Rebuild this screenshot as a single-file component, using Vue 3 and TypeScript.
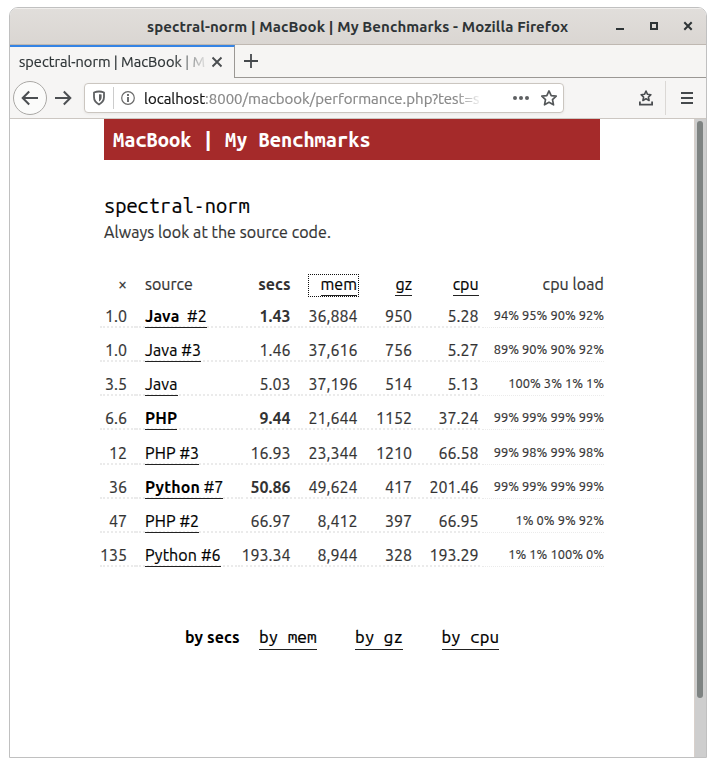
<script setup lang="ts">
interface Row {
  ratio: string
  lang: string
  id: string
  best?: boolean
  secs: string
  mem: string
  gz: string
  cpu: string
  load: string
}

const rows: Row[] = [
  { ratio: '1.0', lang: 'Java', id: '\u00a0 #2', best: true, secs: '1.43', mem: '36,884', gz: '950', cpu: '5.28', load: '94% 95% 90% 92%' },
  { ratio: '1.0', lang: 'Java', id: ' #3', secs: '1.46', mem: '37,616', gz: '756', cpu: '5.27', load: '89% 90% 90% 92%' },
  { ratio: '3.5', lang: 'Java', id: '', secs: '5.03', mem: '37,196', gz: '514', cpu: '5.13', load: '100% 3% 1% 1%' },
  { ratio: '6.6', lang: 'PHP', id: '', best: true, secs: '9.44', mem: '21,644', gz: '1152', cpu: '37.24', load: '99% 99% 99% 99%' },
  { ratio: '12', lang: 'PHP', id: ' #3', secs: '16.93', mem: '23,344', gz: '1210', cpu: '66.58', load: '99% 98% 99% 98%' },
  { ratio: '36', lang: 'Python', id: ' #7', best: true, secs: '50.86', mem: '49,624', gz: '417', cpu: '201.46', load: '99% 99% 99% 99%' },
  { ratio: '47', lang: 'PHP', id: ' #2', secs: '66.97', mem: '8,412', gz: '397', cpu: '66.95', load: '1% 0% 9% 92%' },
  { ratio: '135', lang: 'Python', id: ' #6', secs: '193.34', mem: '8,944', gz: '328', cpu: '193.29', load: '1% 1% 100% 0%' },
]
const sorts = ['by mem', 'by gz', 'by cpu']
</script>

<template>
  <div class="window">
    <header class="titlebar">
      <span class="spacer"></span>
      <span class="wtitle">spectral-norm | MacBook | My Benchmarks - Mozilla Firefox</span>
      <span class="controls">
        <svg width="10" height="10" viewBox="0 0 10 10"><path d="M1 8h8" stroke="#2e3436" stroke-width="2" /></svg>
        <svg width="10" height="10" viewBox="0 0 10 10"><path d="M2 2h6v6H2z" fill="none" stroke="#2e3436" stroke-width="2" /></svg>
        <svg width="10" height="10" viewBox="0 0 10 10"><path d="M1.3 1.3l7.4 7.4M8.7 1.3L1.3 8.7" stroke="#2e3436" stroke-width="2" /></svg>
      </span>
    </header>

    <div class="tabs">
      <div class="tab">
        <span class="tabtext">spectral-norm | MacBook | M</span>
        <svg width="12" height="12" viewBox="0 0 12 12"><path d="M1.5 1.5l9 9M10.5 1.5l-9 9" stroke="#4a4d50" stroke-width="1.9" /></svg>
      </div>
      <div class="tabrest">
        <svg width="14" height="14" viewBox="0 0 14 14"><path d="M7 0v14M0 7h14" stroke="#45494c" stroke-width="1.8" /></svg>
      </div>
    </div>

    <div class="toolbar">
      <span class="back">
        <svg width="18" height="16" viewBox="0 0 18 16"><path d="M17 8H2M8.2 1.5L1.7 8l6.5 6.5" fill="none" stroke="#4c4f52" stroke-width="2" /></svg>
      </span>
      <svg class="forward" width="18" height="16" viewBox="0 0 18 16"><path d="M1 8h15M9.8 1.5L16.3 8l-6.5 6.5" fill="none" stroke="#4c4f52" stroke-width="2" /></svg>
      <div class="urlbar">
        <svg width="14" height="16" viewBox="0 0 14 16">
          <path d="M7 1.500c2 0 3.800.5 5 1v4.600C12 11 9.500 13.200 7 14.500 4.500 13.200 2 11 2 7.100V2.500c1.200-.5 3-1 5-1z" fill="none" stroke="#5e6062" stroke-width="1.800" stroke-linejoin="round" />
          <path d="M7 4.200v7.400c1.600-1 2.600-2.500 2.600-4.600V4.600C8.800 4.300 7.900 4.200 7 4.200z" fill="#5e6062" />
        </svg>
        <span class="divider"></span>
        <svg class="info" width="14" height="14" viewBox="0 0 14 14">
          <circle cx="7" cy="7" r="6.300" fill="none" stroke="#6a6a6a" stroke-width="1.200" />
          <path d="M7 3v2M7 6v5" stroke="#5e6062" stroke-width="1.800" />
        </svg>
        <span class="url"><b>localhost</b>:8000/macbook/performance.php?test=s</span>
        <svg class="dots" width="18" height="6" viewBox="0 0 18 6"><g fill="#5e6062"><circle cx="3" cy="3" r="2" /><circle cx="9" cy="3" r="2" /><circle cx="15" cy="3" r="2" /></g></svg>
        <svg class="star" width="18" height="18" viewBox="0 0 18 18"><path d="M9 1.900l2.200 4.700 5 .6-3.700 3.500 1 5.100L9 13.300l-4.500 2.500 1-5.100L1.800 7.200l5-.6z" fill="none" stroke="#55585a" stroke-width="1.700" stroke-linejoin="round" /></svg>
      </div>
      <svg class="library" width="16" height="18" viewBox="0 0 16 18">
        <path d="M8 2l1.500 3.300 3.400.4-2.500 2.400.7 3.400L8 9.800l-3.100 1.700.7-3.400-2.500-2.400 3.400-.4z" fill="none" stroke="#4a4d50" stroke-width="1.600" stroke-linejoin="round" />
        <path d="M1.900 12.500v3.200h12.200v-3.200" fill="none" stroke="#4a4d50" stroke-width="1.800" />
      </svg>
      <span class="tooldivider"></span>
      <svg class="menu" width="12" height="14" viewBox="0 0 12 14"><path d="M0 2h12M0 7h12M0 12h12" stroke="#45494c" stroke-width="1.800" /></svg>
    </div>

    <div class="viewport">
      <main class="page">
        <div class="banner">MacBook | My Benchmarks</div>
        <h1>spectral-norm</h1>
        <p class="note">Always look at the source code.</p>

        <div class="table">
          <div class="row head">
            <span class="num times">×</span>
            <span class="src">source</span>
            <span class="num secs"><strong>secs</strong></span>
            <span class="num mem"><a class="focused"><u>mem</u></a></span>
            <span class="num gz"><u>gz</u></span>
            <span class="num cpu"><u>cpu</u></span>
            <span class="num headload">cpu load</span>
          </div>
          <div v-for="r in rows" :key="r.lang + r.id" class="row">
            <span class="num ratio">{{ r.ratio }}</span>
            <span class="src"><u><component :is="r.best ? 'strong' : 'span'">{{ r.lang }}</component>{{ r.id }}</u></span>
            <span class="num secs"><component :is="r.best ? 'strong' : 'span'">{{ r.secs }}</component></span>
            <span class="num mem">{{ r.mem }}</span>
            <span class="num gz">{{ r.gz }}</span>
            <span class="num cpu">{{ r.cpu }}</span>
            <span class="num load">{{ r.load }}</span>
          </div>
        </div>

        <nav class="sorts">
          <strong>by secs</strong>
          <u v-for="s in sorts" :key="s" :class="s.replace(' ', '-')">{{ s }}</u>
        </nav>
      </main>
      <div class="scrollbar"><div class="thumb"></div></div>
    </div>
  </div>
</template>

<style>
body { background: #fff; }
</style>

<style scoped>
* { box-sizing: border-box; }
svg { display: block; flex: none; }
.window {
  width: 698px; height: 751px; margin: 7px 0 0 9px;
  border: 1px solid #c0c0c0; border-radius: 9px 9px 0 0; overflow: hidden;
  display: flex; flex-direction: column; background: #fff;
  font-family: Ubuntu, "Noto Sans", sans-serif; color: #333; white-space: nowrap;
}
.titlebar {
  height: 37px; flex: none; display: flex; align-items: center;
  background: linear-gradient(#e1dedb, #dad6d2);
  border-bottom: 1px solid #bfb8b1; box-shadow: inset 0 1px #f0eeec;
}
.spacer { width: 137px; flex: none; }
.wtitle { font-size: 15px; font-weight: 700; letter-spacing: .09px; color: #2e3436; width: 468px; padding-top: 1px; }
.controls { display: flex; gap: 24px; }
.tabs { height: 33px; flex: none; display: flex; background: #f6f5f3; }
.tab {
  width: 225px; border-top: 2px solid #3584e4; border-right: 1px solid #9b9894;
  display: flex; align-items: center; padding: 0 0 2px 9px; gap: 2px; background: #f6f5f4;
}
.tabtext {
  width: 190px; overflow: hidden; font-size: 14.600px; color: #2e3436; -webkit-text-stroke: .2px;
  -webkit-mask-image: linear-gradient(90deg, #000 155px, transparent 190px);
  mask-image: linear-gradient(90deg, #000 155px, transparent 190px);
}
.tabrest { flex: 1; border-bottom: 1px solid #9b9894; padding: 9px 0 0 9px; }
.toolbar {
  height: 41px; flex: none; display: flex; align-items: center;
  background: #f6f5f4; border-bottom: 1px solid #ccc7c2; padding-left: 3px;
}
.back {
  width: 34px; height: 34px; flex: none; border: 1px solid #aaa8a5; border-radius: 50%; background: #fbfbfa;
  display: flex; align-items: center; justify-content: center;
}
.forward { margin-left: 7px; }
.urlbar {
  margin-left: 12px; width: 480px; height: 30px; flex: none; display: flex; align-items: center;
  border: 1px solid #cbc6c0; border-radius: 4px; background: #fff; padding-left: 7px;
  box-shadow: 0 1px 3px rgba(0, 0, 0, .06);
}
.divider { width: 1px; height: 22px; background: #ccc; margin: 0 7px; }
.url {
  margin-left: 9px; width: 340px; overflow: hidden; font-size: 15px; color: #888; -webkit-text-stroke: .2px;
  -webkit-mask-image: linear-gradient(90deg, #000 312px, transparent 339px);
  mask-image: linear-gradient(90deg, #000 312px, transparent 339px);
}
.url b { font-weight: 400; color: #111; }
.dots { margin-left: 28px; }
.star { margin-left: 10px; }
.library { margin-left: 74px; }
.tooldivider { width: 1px; height: 34px; background: #dbd8d5; margin: 0 15px 0 11px; }
.viewport { flex: 1; display: flex; justify-content: space-between; min-height: 0; }
.page { width: 510px; margin-left: 90px; font-size: 16px; -webkit-text-stroke: .2px; }
.page strong { -webkit-text-stroke: 0; }
.banner {
  width: 496px; height: 41px; margin-left: 4px; padding-left: 9px; background: #a52a2a; color: #fff;
  font: 700 20px/41px "Ubuntu Mono", "DejaVu Sans Mono", monospace; -webkit-text-stroke: 0;
}
h1 { margin: 33px 0 0 4px; color: #000; font: 400 20px/26px "Ubuntu Mono", "DejaVu Sans Mono", monospace; }
.note { margin: 1px 0 0 4px; line-height: 24px; letter-spacing: .08px; }
.table { margin-top: 27px; }
.row {
  display: grid; grid-template-columns: 36px 104px 60px 59px 54px 67px 124px;
  height: 34.150px; align-items: start; line-height: 26px;
}
.head { height: 32px; }
.row > span { height: 25px; border-bottom: 2px dotted #ebebeb; }
.row.head > span { border-bottom: 0; }
.num { text-align: right; padding-right: 9px; margin-left: 1px; }
.row > .ratio { margin-left: 0; }
.src { padding-left: 9px; }
.row > .secs { padding-right: 9.500px; }
.row > .mem { padding-right: 1.500px; }
.row > .gz { padding-right: 1px; }
.row > .cpu { padding-right: 1.400px; }
.row > .load { padding-right: 0; font-size: 12.800px; letter-spacing: .04px; border-bottom-width: 1px; margin-left: 2px; line-height: 25px; }
.row > .headload { padding-right: 0; letter-spacing: .08px; }
u { display: inline-block; text-decoration: none; color: #000; border-bottom: 1px solid #222; line-height: 24px; height: 24px; }
.src u { line-height: 26px; height: 25px; white-space: pre; letter-spacing: .12px; }
.head u { line-height: 26px; height: 25px; }
.row.head .mem { display: flex; justify-content: flex-end; padding: 0; }
.focused {
  display: flex; justify-content: flex-end; align-items: flex-start;
  width: 51px; height: 23px; flex: none; margin-top: 3px; border: 1px dotted #111; padding-right: 1px;
}
.focused u { margin-top: -4px; flex: none; }
.sorts { display: flex; margin: 49px 0 0 85px; line-height: 24px; color: #000; }
.sorts strong { width: 74px; letter-spacing: .1px; }
.sorts u { font-family: "Ubuntu Mono", "DejaVu Sans Mono", monospace; font-size: 17.140px; height: 25px; }
.by-gz { margin-left: 38.500px; }
.by-cpu { margin-left: 38.500px; }
.scrollbar { width: 12px; background: #cecece; border-left: 1px solid #d8d0cb; padding: 2px 3px 0 2px; }
.thumb { width: 6px; height: 577px; border-radius: 3px; background: #7e8382; }
</style>
